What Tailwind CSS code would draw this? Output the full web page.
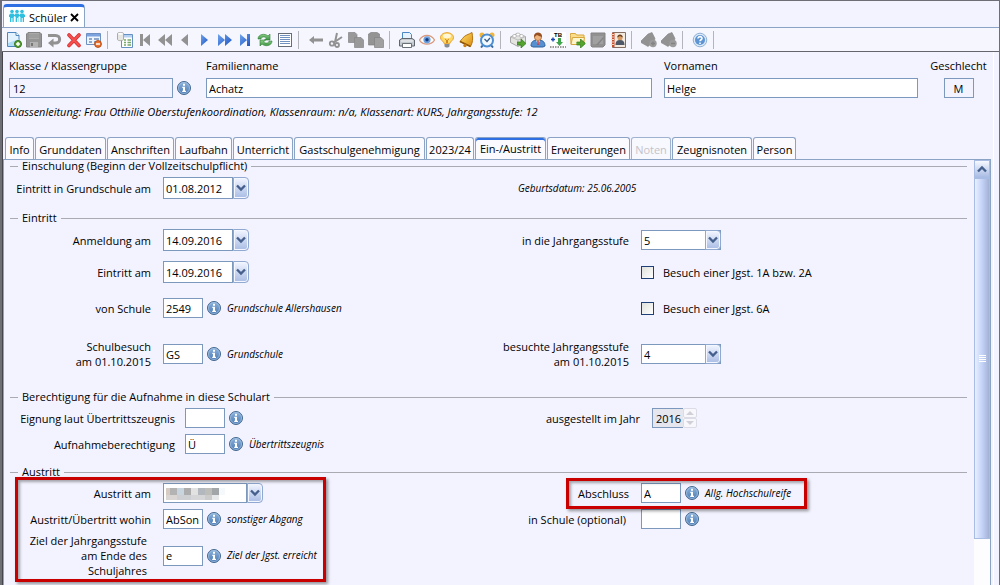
<!DOCTYPE html>
<html lang="de">
<head>
<meta charset="utf-8">
<meta name="viewport" content="width=device-width, initial-scale=1">
<title>Schüler</title>
<script src="https://cdn.jsdelivr.net/npm/@tailwindcss/browser@4"></script>
</head>
<body class="flex h-screen flex-col overflow-hidden border-t border-r border-l-2 border-[#6e6e76] bg-[#f3f3ff] font-['Open_Sans','Noto_Sans',sans-serif] text-[11px] leading-[15px] text-black">

<svg class="absolute h-0 w-0" aria-hidden="true">
  <defs>
    <linearGradient id="gInfo" x1="0" y1="0" x2="0" y2="1"><stop offset="0" stop-color="#8db4dc"/><stop offset="1" stop-color="#4a7ab4"/></linearGradient>
    <linearGradient id="gBlue" x1="0" y1="0" x2="1" y2="1"><stop offset="0" stop-color="#6fa4ee"/><stop offset="1" stop-color="#1d55c4"/></linearGradient>
    <linearGradient id="gGold" x1="0" y1="0" x2="1" y2="1"><stop offset="0" stop-color="#ffe36e"/><stop offset="1" stop-color="#dc8a10"/></linearGradient>
    <linearGradient id="gGreen" x1="0" y1="0" x2="0" y2="1"><stop offset="0" stop-color="#8fd08a"/><stop offset="1" stop-color="#3a9440"/></linearGradient>
    <symbol id="info" viewBox="0 0 14 14"><circle cx="7" cy="7" r="6.5" fill="url(#gInfo)" stroke="#44688f"/><circle cx="7" cy="7" r="5.5" fill="none" stroke="#a9c6e4" stroke-width=".7"/><path d="M6 2.8h2v2H6zM5.3 5.8H8v4h1V11H5.2V9.8H6V7h-.7z" fill="#fff"/></symbol>
    <symbol id="chev" viewBox="0 0 10 8"><path d="M1 1.5 5 5.5 9 1.5" fill="none" stroke="#45608c" stroke-width="2.4"/></symbol>
    <symbol id="arrow" viewBox="0 0 9 9"><path d="M0 3h4V0l5 4.5L4 9V6H0z" fill="#53a32e" stroke="#2f7a1a" stroke-width=".7"/></symbol>
  </defs>
</svg>

<!-- window tab -->
<header class="flex h-[27px] shrink-0 items-end border-b border-[#8ba3c4] pl-px">
  <div class="-mb-px flex h-[24px] w-[82px] items-center rounded-t-sm border border-t-[3px] border-[#8ba3c4] border-t-[#2f6fe4] bg-white pl-[5px]">
    <svg class="h-4 w-4" viewBox="0 0 16 16" fill="#2fc0e0"><circle cx="3" cy="2.500" r="1.800"/><circle cx="8" cy="2.500" r="1.800"/><circle cx="13" cy="2.500" r="1.800"/><path d="M0 6l1.500-1.500h3L5.500 6l1-1.500h3L10.500 6l1-1.500h3L16 6v2h-1v5h-1.300V9h-1v4h-1.300V8l-1-1-1 1v5H9V9H8v4H6.700V8l-1-1-1 1v5H3.400V9h-1v4H1V8H0z"/></svg>
    <h1 class="ml-1">Schüler</h1>
    <button class="ml-[3px]" aria-label="Schließen"><svg class="h-[9px] w-[9px]" viewBox="0 0 9 9"><path d="M1 1l7 7M8 1L1 8" stroke="#000" stroke-width="1.800"/></svg></button>
  </div>
</header>

<!-- toolbar -->
<nav aria-label="Werkzeugleiste" class="flex h-[24px] shrink-0 items-center border-b border-[#65656d] bg-[#f6f6ff] pl-[2px] [&>button]:flex [&>button]:h-5 [&>button]:w-5 [&>button]:shrink-0 [&>button]:items-center [&>button]:justify-center [&>i]:mr-[7px] [&>i]:ml-[3px] [&>i]:h-[18px] [&>i]:w-px [&>i]:shrink-0 [&>i]:bg-[#b4b4bc] [&_svg]:h-4 [&_svg]:w-4">
  <button aria-label="Neu"><svg viewBox="0 0 16 16"><path d="M1.500.5H10l3 3v11h-11.500z" fill="#e3f2ff" stroke="#4d87bd"/><path d="M10 .5v3h3" fill="#fff" stroke="#4d87bd"/><path d="M2 11l11-4v7H2z" fill="#b0dcf8"/><circle cx="12" cy="12" r="3.500" fill="#5ba336" stroke="#37751c"/><path d="M12 10v4M10 12h4" stroke="#fff" stroke-width="1.500"/></svg></button>
  <button aria-label="Speichern"><svg viewBox="0 0 16 16"><path d="M.5 2L2 .5h12L15.500 2v13h-15z" fill="#959595" stroke="#858585"/><path d="M3 1h10v6H3z" fill="#a9a9a9"/><path d="M3 3h10M3 5h10" stroke="#919191"/><path d="M4 10h8v5H4z" fill="#b3b3b3"/><path d="M5 11h2v3H5z" fill="#777"/></svg></button>
  <button aria-label="Rückgängig"><svg viewBox="0 0 16 16"><path d="M2 3.500h7.500c5.500 0 5.500 7.500 0 7.500H6" fill="none" stroke="#929292" stroke-width="3"/><path d="M7.500 6.500v9L2 11z" fill="#929292"/></svg></button>
  <button aria-label="Löschen"><svg viewBox="0 0 16 16"><path d="M3 3l10 10.500M13 3L3 13.500" stroke="#d92c2c" stroke-width="3.600" stroke-linecap="round"/><path d="M3 3l10 10.500M13 3L3 13.500" stroke="#f45050" stroke-width="2" stroke-linecap="round"/></svg></button>
  <button aria-label="Eintrag entfernen"><svg viewBox="0 0 16 16"><path d="M.5 1.500h14v11H.5z" fill="#eef4fc" stroke="#6d8fc2"/><path d="M1 2h13v2.500H1z" fill="#7ba4df"/><path d="M3 7h3M3 10h3M8 7h5M8 10h3" stroke="#6e8ebb" stroke-width="1.500"/><circle cx="12" cy="12" r="3.400" fill="#ec7430" stroke="#b64a15"/><path d="M10 12h4" stroke="#fff" stroke-width="1.500"/></svg></button>
  <i></i>
  <button aria-label="Datentabelle"><svg viewBox="0 0 16 16"><path d="M4.500 2.500h11v13h-11z" fill="#fff" stroke="#6590c4"/><path d="M5 3h10v2.500H5z" fill="#b7d2f0"/><path d="M7 8h2M10.500 8H14M7 10.500h2M10.500 10.500H14M7 13h2M10.500 13H14" stroke="#75a866" stroke-width="1.500"/><path d="M.5 1.500c0-1.500 6-1.500 6 0v6c0 1.500-6 1.500-6 0z" fill="#e7e7e4" stroke="#aaa"/><ellipse cx="3.500" cy="1.800" rx="2.500" ry=".9" fill="#fff"/></svg></button>
  <button aria-label="Erster"><svg viewBox="0 0 16 16" fill="#929292"><path d="M3 2h3v12H3zM13 2v12L6 8z"/></svg></button>
  <button aria-label="Zurückspringen"><svg viewBox="0 0 16 16" fill="#929292"><path d="M8 2v12L1 8zM15 2v12L8 8z"/></svg></button>
  <button aria-label="Voriger"><svg viewBox="0 0 16 16" fill="#929292"><path d="M11 2v12L4 8z"/></svg></button>
  <button aria-label="Nächster"><svg viewBox="0 0 16 16" fill="url(#gBlue)"><path d="M4 2v12l7-6z"/></svg></button>
  <button aria-label="Vorspringen"><svg viewBox="0 0 16 16" fill="url(#gBlue)"><path d="M1 2v12l7-6zM8 2v12l7-6z"/></svg></button>
  <button aria-label="Letzter"><svg viewBox="0 0 16 16" fill="url(#gBlue)"><path d="M3 2v12l7-6zM10 2h3v12h-3z"/></svg></button>
  <button aria-label="Aktualisieren"><svg viewBox="0 0 16 16" fill="url(#gGreen)" stroke="#2f7f37" stroke-width=".6"><path d="M1 7c0-5 7-6 10-3l2-2v6H7.500l2-2C7 4 4 5 4 7z"/><path d="M15 9c0 5-7 6-10 3l-2 2V8h5.500l-2 2c2.500 2 5.500 1 5.500-1z"/></svg></button>
  <button aria-label="Liste"><svg viewBox="0 0 16 16" shape-rendering="crispEdges"><path d="M1.500 1.500h13v13h-13z" fill="#fff" stroke="#666c78"/><path d="M3 3.500h10M3 5.500h10M3 7.500h10M3 9.500h10M3 11.500h10" stroke="#7192c0"/></svg></button>
  <i></i>
  <button aria-label="Zurück"><svg viewBox="0 0 16 16"><path d="M1 8l5-4v2.500h9v3H6V12z" fill="#929292"/></svg></button>
  <button aria-label="Ausschneiden"><svg viewBox="0 0 16 16" fill="none" stroke="#929292"><path d="M9 1L7 10M14 5l-9 6" stroke-width="2"/><circle cx="4" cy="11.500" r="2.200" stroke-width="1.800"/><circle cx="9" cy="13" r="2" stroke-width="1.800"/></svg></button>
  <button aria-label="Kopieren"><svg viewBox="0 0 16 16" fill="#999" stroke="#858585" stroke-width=".7"><path d="M.5.5H7l2 2v8H.5z"/><path d="M6.500 5.500H13l2.500 2.500v7.500h-9z"/></svg></button>
  <button aria-label="Einfügen"><svg viewBox="0 0 16 16" fill="#949494" stroke="#828282" stroke-width=".7"><path d="M.5 2L3 .5h6L11.500 2v11H.5z"/><path d="M6.500 5.500H13l2.500 2.500v7.500h-9z" fill="#a0a0a0"/></svg></button>
  <i></i>
  <button aria-label="Drucken"><svg viewBox="0 0 16 16"><path d="M3.500 8V.5h7l2 2V8z" fill="#e6f3ff" stroke="#4b86c7"/><path d="M.5 8L3 6.500h10L15.500 8v6h-15z" fill="#c5cad0" stroke="#60666e"/><path d="M2 9h12" stroke="#f8f8f8"/><path d="M3.500 11.500h9v4h-9z" fill="#fff" stroke="#697078"/></svg></button>
  <button aria-label="Ansicht"><svg viewBox="0 0 16 16"><path d="M.5 8C4 2 12 2 15.500 8 12 13.500 4 13.500.5 8z" fill="#fff" stroke="#d99b80" stroke-width="1.300"/><circle cx="8" cy="7.800" r="3.600" fill="#6b9fdf"/><circle cx="8" cy="7.800" r="1.700" fill="#163c7e"/></svg></button>
  <button aria-label="Hinweis"><svg viewBox="0 0 16 16"><path d="M8 .7c-4 0-6.500 2.300-6.500 5 0 2.800 3.500 3.500 3.700 6h5.600c.2-2.500 3.700-3.200 3.700-6 0-2.700-2.500-5-6.500-5z" fill="#ffd968" stroke="#e5a02c"/><ellipse cx="8" cy="4" rx="4" ry="2.300" fill="#fff7d6"/><path d="M6 7l1.500 1v3M10 7L8.500 8v3" fill="none" stroke="#cd8920"/><path d="M5.500 12h5v2.500l-1.500 1H7l-1.500-1z" fill="#858b92"/></svg></button>
  <button aria-label="Erinnerung"><svg viewBox="0 0 16 16"><path d="M13 .5c-3 2-7.500 2.500-9.500 6L1 9.500l10.500 5L13 11c1-3 .5-7 0-10.500z" fill="url(#gGold)" stroke="#b8740f"/><path d="M1 9.500l10.500 5" stroke="#8e5508" stroke-width="1.500"/><circle cx="6" cy="13.500" r="1.700" fill="#c77912"/></svg></button>
  <button aria-label="Wecker"><svg viewBox="0 0 16 16"><circle cx="3" cy="3" r="2.500" fill="#f2b53b"/><circle cx="13" cy="3" r="2.500" fill="#f2b53b"/><path d="M4 13l-2 2.500M12 13l2 2.500" stroke="#36679b" stroke-width="2"/><circle cx="8" cy="8.500" r="6" fill="#f5faff" stroke="#4d8fd2" stroke-width="2"/><path d="M5.500 7L8 9.500 11 6" fill="none" stroke="#355d88" stroke-width="1.300"/></svg></button>
  <i></i>
  <button aria-label="Modul exportieren"><svg viewBox="0 0 16 16"><path d="M.5 5L7 1.500l8.500 3v6L8 14.500.5 10.500z" fill="#e4e4e1" stroke="#a6a6a6"/><path d="M.5 5L8 8l7.500-3.500M8 8v6" fill="none" stroke="#bdbdbd"/><ellipse cx="4.500" cy="4" rx="2" ry="1.500" fill="#fff" stroke="#aaa" stroke-width=".7"/><ellipse cx="8" cy="2.500" rx="2" ry="1.500" fill="#fff" stroke="#aaa" stroke-width=".7"/><ellipse cx="11.500" cy="4" rx="2" ry="1.500" fill="#fff" stroke="#aaa" stroke-width=".7"/><use href="#arrow" x="7" y="7" width="9" height="9"/></svg></button>
  <button aria-label="Person"><svg viewBox="0 0 16 16"><path d="M1 14c0-4 2-6 7-6s7 2 7 6l-2 1H3z" fill="#578fd0" stroke="#2f629f"/><path d="M6 8h4l-2 5z" fill="#fff"/><path d="M8 9v4" stroke="#cf3030" stroke-width="1.500"/><circle cx="8" cy="5" r="3.600" fill="#eeb27c" stroke="#9a5c28" stroke-width=".7"/><path d="M4 5c-.5-6 8.500-6 8 0C10 4.500 8 3.500 7 3 6 4 5 4.500 4 5z" fill="#97501f"/></svg></button>
  <button aria-label="TB"><svg viewBox="0 0 16 16"><path d="M0 0h16v16H0z" fill="#fff"/><text x="4" y="5" font-size="6" font-weight="700" font-family="Liberation Sans, sans-serif">TB</text><path d="M3 5.500v4M1 7.500h4" stroke="#1648b8" stroke-width="1.400"/><path d="M8 6h3v4h2l-3.500 4L6 10h2z" fill="#3ca44a"/><path d="M0 15h16" stroke="#333" stroke-dasharray="1.500 1"/></svg></button>
  <button aria-label="Ordner exportieren"><svg viewBox="0 0 16 16"><path d="M.5 3.500v-2h5l1 1.500H14v9H1z" fill="#f9dc8c" stroke="#d8a83e"/><path d="M2.500 5.500h12l-1.500 7H1z" fill="#fff5cc" stroke="#d8a83e"/><use href="#arrow" x="6.500" y="7" width="9" height="9"/></svg></button>
  <button aria-label="Bearbeiten"><svg viewBox="0 0 16 16"><path d="M1 1h14v12l-2 2H2l-1-1z" fill="#919191" stroke="#838383"/><path d="M3 4h10v8H3z" fill="#a0a0a0"/><path d="M6 13l7-8 1 1-6 7z" fill="#858585"/></svg></button>
  <button aria-label="Adressbuch"><svg viewBox="0 0 16 16"><path d="M2.500.5h13v15h-13z" fill="#f2eadf" stroke="#866d62"/><path d="M2 1h2.500v14H2z" fill="#c64f2e"/><path d="M1 2.500h3M1 5h3M1 7.500h3M1 10h3M1 12.500h3" stroke="#f5d4be"/><path d="M5.500 13c0-4 2-5 4.500-5s4.500 1 4.500 5z" fill="#4e5866"/><circle cx="10" cy="5.800" r="2.500" fill="#d79862"/><path d="M7.200 5.500c0-4 5.600-4 5.600 0L10 4z" fill="#6a3e20"/></svg></button>
  <i></i>
  <button aria-label="Hinzufügen"><svg viewBox="0 0 16 16" fill="#929292"><path d="M7 2l4-1.500 3 6-1 3-6 5-7-4V9z" stroke="#858585" stroke-width=".6"/><circle cx="12" cy="11.500" r="3.700" fill="#9c9c9c"/><path d="M12 9.500v4M10 11.500h4" stroke="#838383" stroke-width="1.300"/></svg></button>
  <button aria-label="Entfernen"><svg viewBox="0 0 16 16" fill="#929292"><path d="M7 2l4-1.500 3 6-1 3-6 5-7-4V9z" stroke="#858585" stroke-width=".6"/><circle cx="12" cy="11.500" r="3.700" fill="#9c9c9c"/><path d="M10 11.500h4" stroke="#838383" stroke-width="1.300"/></svg></button>
  <i></i>
  <button aria-label="Hilfe"><svg viewBox="0 0 16 16"><circle cx="8" cy="8" r="6.800" fill="#dce9f7" stroke="#91b0d4"/><circle cx="8" cy="8" r="5" fill="#5c94d4"/><path d="M6 6.500c0-2.700 4.200-2.400 4 0-.1 1.300-2 1.300-2 2.800M8 10.500V12" fill="none" stroke="#fff" stroke-width="1.600"/></svg></button>
  <i></i>
</nav>

<main class="mr-[5px] flex min-h-0 flex-1 flex-col border-r border-l border-r-white border-l-[#45454b]">
  <!-- student head data -->
  <div class="flex gap-3 pt-[5px] pr-[6px] pl-[6px]">
    <div class="flex w-[185px] shrink-0 flex-col gap-[3px]">
      <label for="klasse" class="h-[18px] leading-[18px]">Klasse / Klassengruppe</label>
      <div class="flex items-center gap-1"><input id="klasse" value="12" readonly class="h-5 w-[164px] border border-[#7c98bd] px-[3px]"><button aria-label="Info zur Klasse"><svg class="h-[14px] w-[14px]"><use href="#info"/></svg></button></div>
    </div>
    <div class="flex min-w-0 flex-[446] flex-col gap-[3px]">
      <label for="fam" class="h-[18px] leading-[18px]">Familienname</label>
      <input id="fam" value="Achatz" class="h-5 w-full border border-[#7c98bd] bg-white px-[2px]">
    </div>
    <div class="flex min-w-0 flex-[254] flex-col gap-[3px]">
      <label for="vor" class="h-[18px] leading-[18px]">Vornamen</label>
      <input id="vor" value="Helge" class="h-5 w-full border border-[#7c98bd] bg-white px-[2px]">
    </div>
    <div class="flex w-[57px] shrink-0 flex-col items-center gap-[3px]">
      <label for="sex" class="h-[18px] leading-[18px]">Geschlecht</label>
      <input id="sex" value="M" readonly class="h-5 w-[30px] border border-[#7c98bd] text-center">
    </div>
  </div>
  <p class="mt-[6px] pl-[6px] italic">Klassenleitung: Frau Otthilie Oberstufenkoordination, Klassenraum: n/a, Klassenart: KURS, Jahrgangsstufe: 12</p>

  <!-- page tabs -->
  <div role="tablist" class="mt-[17px] flex h-[23px] shrink-0 items-end gap-px pl-[2px] [&>button]:h-[22px] [&>button]:shrink-0 [&>button]:rounded-t-[3px] [&>button]:border [&>button]:border-b-0 [&>button]:border-[#8ba3c4] [&>button]:bg-[#fafaff] [&>button]:whitespace-nowrap">
    <button role="tab" class="w-[29px] pt-[2px]">Info</button>
    <button role="tab" class="w-[71px] pt-[2px]">Grunddaten</button>
    <button role="tab" class="w-[67px] pt-[2px]">Anschriften</button>
    <button role="tab" class="w-[57px] pt-[2px]">Laufbahn</button>
    <button role="tab" class="w-[60px] pt-[2px]">Unterricht</button>
    <button role="tab" class="w-[131px] pt-[2px]">Gastschulgenehmigung</button>
    <button role="tab" class="w-[48px] pt-[2px]">2023/24</button>
    <button role="tab" aria-selected="true" class="w-[71px] shadow-[inset_0_2px_0_#2f6fe4]">Ein-/Austritt</button>
    <button role="tab" class="w-[83px] pt-[2px]">Erweiterungen</button>
    <button role="tab" disabled class="w-[40px] pt-[2px] text-[#b8b8bc] opacity-80">Noten</button>
    <button role="tab" class="w-[80px] pt-[2px]">Zeugnisnoten</button>
    <button role="tab" class="w-[43px] pt-[2px]">Person</button>
  </div>

  <div class="mr-[2px] flex min-h-0 flex-1 border border-b-0 border-[#8ba3c4]">
    <form class="min-w-0 flex-1 pr-[7px] pl-[6px]">
      <h2 class="flex h-3 items-center gap-1 leading-3 before:h-px before:w-2 before:bg-[#aaaab2] after:h-px after:flex-1 after:bg-[#aaaab2]">Einschulung (Beginn der Vollzeitschulpflicht)</h2>
      <div class="mt-[5px] grid h-[22px] grid-cols-[478px_1fr] items-center">
        <div class="flex items-center gap-3"><label for="f1" class="w-[141px] text-right whitespace-nowrap">Eintritt in Grundschule am</label>
          <div class="flex"><input id="f1" value="01.08.2012" class="h-[22px] w-[70px] border border-[#7c98bd] bg-white px-[2px]"><button type="button" aria-label="Kalender" class="flex h-[22px] w-4 items-center justify-center rounded-r-sm border border-[#8fa9d0] bg-linear-to-b from-[#f2f6ff] to-[#a9bce4] shadow-[inset_0_0_0_1px_#f4f7ff]"><svg class="h-2 w-[10px]"><use href="#chev"/></svg></button></div></div>
        <p class="pl-[30px] text-[10px] italic">Geburtsdatum: 25.06.2005</p>
      </div>

      <h2 class="mt-[13px] flex h-3 items-center gap-1 leading-3 before:h-px before:w-2 before:bg-[#aaaab2] after:h-px after:flex-1 after:bg-[#aaaab2]">Eintritt</h2>
      <div class="mt-[5px] grid h-[22px] grid-cols-[478px_1fr] items-center">
        <div class="flex items-center gap-3"><label for="f2" class="w-[141px] text-right">Anmeldung am</label>
          <div class="flex"><input id="f2" value="14.09.2016" class="h-[22px] w-[70px] border border-[#7c98bd] bg-white px-[2px]"><button type="button" aria-label="Kalender" class="flex h-[22px] w-4 items-center justify-center rounded-r-sm border border-[#8fa9d0] bg-linear-to-b from-[#f2f6ff] to-[#a9bce4] shadow-[inset_0_0_0_1px_#f4f7ff]"><svg class="h-2 w-[10px]"><use href="#chev"/></svg></button></div></div>
        <div class="flex items-center gap-3"><label for="f3" class="w-[141px] text-right">in die Jahrgangsstufe</label>
          <div class="relative"><select id="f3" class="block h-5 w-20 appearance-none border border-[#7c98bd] bg-white px-[2px]"><option>5</option></select><span class="pointer-events-none absolute top-0 right-0 flex h-5 w-4 items-center justify-center rounded-r-sm border border-[#8fa9d0] bg-linear-to-b from-[#f2f6ff] to-[#a9bce4] shadow-[inset_0_0_0_1px_#f4f7ff]"><svg class="h-2 w-[10px]"><use href="#chev"/></svg></span></div></div>
      </div>
      <div class="mt-[10px] grid h-[22px] grid-cols-[478px_1fr] items-center">
        <div class="flex items-center gap-3"><label for="f4" class="w-[141px] text-right">Eintritt am</label>
          <div class="flex"><input id="f4" value="14.09.2016" class="h-[22px] w-[70px] border border-[#7c98bd] bg-white px-[2px]"><button type="button" aria-label="Kalender" class="flex h-[22px] w-4 items-center justify-center rounded-r-sm border border-[#8fa9d0] bg-linear-to-b from-[#f2f6ff] to-[#a9bce4] shadow-[inset_0_0_0_1px_#f4f7ff]"><svg class="h-2 w-[10px]"><use href="#chev"/></svg></button></div></div>
        <label class="flex items-center gap-[9px] pl-[153px] whitespace-nowrap"><input type="checkbox" class="h-[13px] w-[13px] appearance-none border border-[#1e3f78] bg-linear-to-br from-[#e0e0dc] to-white">Besuch einer Jgst. 1A bzw. 2A</label>
      </div>
      <div class="mt-[15px] grid h-5 grid-cols-[478px_1fr] items-center">
        <div class="flex items-center gap-3"><label for="f5" class="w-[141px] text-right">von Schule</label>
          <div class="flex items-center gap-1"><input id="f5" value="2549" class="h-5 w-10 border border-[#7c98bd] bg-white px-[2px]"><button type="button" aria-label="Info"><svg class="h-[14px] w-[14px]"><use href="#info"/></svg></button><span class="pl-[2px] text-[10px] italic">Grundschule Allershausen</span></div></div>
        <label class="flex items-center gap-[9px] pl-[153px] whitespace-nowrap"><input type="checkbox" class="h-[13px] w-[13px] appearance-none border border-[#1e3f78] bg-linear-to-br from-[#e0e0dc] to-white">Besuch einer Jgst. 6A</label>
      </div>
      <div class="mt-[21px] grid h-[30px] grid-cols-[478px_1fr] items-center">
        <div class="flex items-center gap-3"><label for="f6" class="w-[141px] text-right">Schulbesuch<br>am 01.10.2015</label>
          <div class="flex items-center gap-1"><input id="f6" value="GS" class="h-5 w-10 border border-[#7c98bd] bg-white px-[2px]"><button type="button" aria-label="Info"><svg class="h-[14px] w-[14px]"><use href="#info"/></svg></button><span class="pl-[2px] text-[10px] italic">Grundschule</span></div></div>
        <div class="flex items-center gap-3"><label for="f7" class="w-[141px] text-right">besuchte Jahrgangsstufe<br>am 01.10.2015</label>
          <div class="relative"><select id="f7" class="block h-5 w-20 appearance-none border border-[#7c98bd] bg-white px-[2px]"><option>4</option></select><span class="pointer-events-none absolute top-0 right-0 flex h-5 w-4 items-center justify-center rounded-r-sm border border-[#8fa9d0] bg-linear-to-b from-[#f2f6ff] to-[#a9bce4] shadow-[inset_0_0_0_1px_#f4f7ff]"><svg class="h-2 w-[10px]"><use href="#chev"/></svg></span></div></div>
      </div>

      <h2 class="mt-[22px] flex h-3 items-center gap-1 leading-3 before:h-px before:w-2 before:bg-[#aaaab2] after:h-px after:flex-1 after:bg-[#aaaab2]">Berechtigung für die Aufnahme in diese Schulart</h2>
      <div class="mt-[5px] grid h-5 grid-cols-[478px_1fr] items-center">
        <div class="flex items-center gap-[10px]"><label for="f8" class="w-[165px] text-right whitespace-nowrap">Eignung laut Übertrittszeugnis</label>
          <div class="flex items-center gap-1"><input id="f8" class="h-5 w-10 border border-[#7c98bd] bg-white px-[2px]"><button type="button" aria-label="Info"><svg class="h-[14px] w-[14px]"><use href="#info"/></svg></button></div></div>
        <div class="flex items-center gap-3"><label for="f9" class="w-[152px] text-right">ausgestellt im Jahr</label>
          <div class="flex"><input id="f9" value="2016" disabled class="h-5 w-[31px] border border-r-0 border-[#7c98bd] bg-[#e6e6ee] pl-[3px]"><span class="flex w-[14px] flex-col"><button type="button" disabled aria-label="Mehr" class="flex h-[10px] items-center justify-center rounded-xs border border-[#dcdce6] bg-[#f8f8fc]"><svg class="h-1 w-2" viewBox="0 0 8 4"><path d="M4 0l4 4H0z" fill="#d0d0d8"/></svg></button><button type="button" disabled aria-label="Weniger" class="flex h-[10px] items-center justify-center rounded-xs border border-[#dcdce6] bg-[#f8f8fc]"><svg class="h-1 w-2" viewBox="0 0 8 4"><path d="M0 0h8L4 4z" fill="#d0d0d8"/></svg></button></span></div></div>
      </div>
      <div class="mt-[6px] flex h-5 items-center gap-[10px]"><label for="f10" class="w-[165px] text-right">Aufnahmeberechtigung</label>
        <div class="flex items-center gap-1"><input id="f10" value="Ü" class="h-5 w-10 border border-[#7c98bd] bg-white px-[2px]"><button type="button" aria-label="Info"><svg class="h-[14px] w-[14px]"><use href="#info"/></svg></button><span class="pl-[2px] text-[10px] italic">Übertrittszeugnis</span></div></div>

      <h2 class="mt-[12px] flex h-3 items-center gap-1 leading-3 before:h-px before:w-2 before:bg-[#aaaab2] after:h-px after:flex-1 after:bg-[#aaaab2]">Austritt</h2>
      <div class="relative">
        <div class="mt-[5px] grid h-5 grid-cols-[478px_1fr] items-center">
          <div class="flex items-center gap-3"><label for="f11" class="w-[141px] text-right">Austritt am</label>
            <div class="relative flex"><input id="f11" class="h-5 w-[84px] border border-[#7c98bd] bg-white px-[2px]"><button type="button" aria-label="Kalender" class="flex h-5 w-4 items-center justify-center rounded-r-sm border border-[#8fa9d0] bg-linear-to-b from-[#f2f6ff] to-[#a9bce4] shadow-[inset_0_0_0_1px_#f4f7ff]"><svg class="h-2 w-[10px]"><use href="#chev"/></svg></button>
              <svg class="pointer-events-none absolute top-[5px] left-[3px] h-3 w-[60px]" viewBox="0 0 60 12" shape-rendering="crispEdges"><path d="M0 0h4v7H0z" fill="#d6ccc4"/><path d="M4 0h7v7H4z" fill="#b3b3b3"/><path d="M11 0h7v7h-7z" fill="#c9d5de"/><path d="M18 0h7v7h-7z" fill="#acacac"/><path d="M25 0h7v7h-7z" fill="#e2e2e2"/><path d="M32 0h7v7h-7z" fill="#b2b8bd"/><path d="M39 0h7v7h-7z" fill="#bdbdba"/><path d="M46 0h7v7h-7z" fill="#a2a6a9"/><path d="M53 0h6v7h-6z" fill="#f5f9fc"/><path d="M0 7h11v5H0z" fill="#dad6d4"/><path d="M11 7h14v5H11z" fill="#cdcfd2"/><path d="M25 7h14v5H25z" fill="#d6d6d9"/><path d="M39 7h7v5h-7z" fill="#cbcbcb"/><path d="M46 7h7v5h-7z" fill="#e6e8ea"/></svg></div></div>
          <div class="flex items-center gap-3"><label for="f12" class="w-[141px] text-right">Abschluss</label>
            <div class="flex items-center gap-1"><input id="f12" value="A" class="h-5 w-10 border border-[#7c98bd] bg-white px-[2px]"><button type="button" aria-label="Info"><svg class="h-[14px] w-[14px]"><use href="#info"/></svg></button><span class="pl-[2px] text-[10px] italic">Allg. Hochschulreife</span></div></div>
        </div>
        <div class="mt-[6px] grid h-5 grid-cols-[478px_1fr] items-center">
          <div class="flex items-center gap-3"><label for="f13" class="w-[141px] text-right whitespace-nowrap">Austritt/Übertritt wohin</label>
            <div class="flex items-center gap-1"><input id="f13" value="AbSon" class="h-5 w-10 border border-[#7c98bd] bg-white pl-[2px]"><button type="button" aria-label="Info"><svg class="h-[14px] w-[14px]"><use href="#info"/></svg></button><span class="pl-[2px] text-[10px] italic">sonstiger Abgang</span></div></div>
          <div class="flex items-center gap-[15px]"><label for="f14" class="w-[138px] text-right">in Schule (optional)</label>
            <div class="flex items-center gap-1"><input id="f14" class="h-5 w-10 border border-[#7c98bd] bg-white px-[2px]"><button type="button" aria-label="Info"><svg class="h-[14px] w-[14px]"><use href="#info"/></svg></button></div></div>
        </div>
        <div class="mt-[4px] flex h-[45px] items-center gap-4"><label for="f15" class="w-[137px] text-right whitespace-nowrap">Ziel der Jahrgangsstufe<br>am Ende des<br>Schuljahres</label>
          <div class="flex items-center gap-1"><input id="f15" value="e" class="h-5 w-10 border border-[#7c98bd] bg-white px-[2px]"><button type="button" aria-label="Info"><svg class="h-[14px] w-[14px]"><use href="#info"/></svg></button><span class="pl-[2px] text-[10px] italic whitespace-nowrap">Ziel der Jgst. erreicht</span></div></div>
        <!-- highlight frames -->
        <div class="pointer-events-none absolute -top-[6px] left-[5px] h-[105px] w-[311px] border-3 border-[#c80000] shadow-[2px_2px_3px_#00000066,inset_2px_2px_3px_#00000055]"></div>
        <div class="pointer-events-none absolute -top-[5px] left-[556px] h-[31px] w-[241px] border-3 border-[#c80000] shadow-[2px_2px_3px_#00000066,inset_2px_2px_3px_#00000055]"></div>
      </div>
    </form>

    <!-- scroll bar -->
    <div class="flex w-4 shrink-0 flex-col bg-[#fdfdff]">
      <button type="button" aria-label="Nach oben" class="flex h-[18px] shrink-0 items-center justify-center border border-[#a9bce4] bg-linear-to-b from-[#f6f9ff] to-[#a9bce4]"><svg class="h-2 w-[10px] rotate-180"><use href="#chev"/></svg></button>
      <div class="flex h-[361px] shrink-0 flex-col items-center justify-center gap-px border border-[#a9bce4] bg-linear-to-r from-[#e8efff] via-[#c4d3f8] to-[#a3b2d4]"><span class="h-px w-[7px] bg-white"></span><span class="h-px w-[7px] bg-white"></span><span class="h-px w-[7px] bg-white"></span><span class="h-px w-[7px] bg-white"></span></div>
    </div>
  </div>
</main>
</body>
</html>
